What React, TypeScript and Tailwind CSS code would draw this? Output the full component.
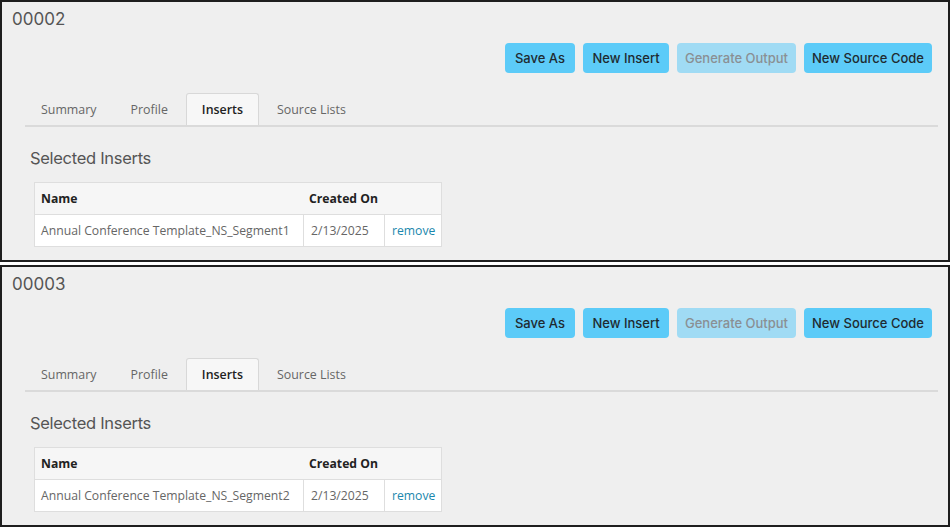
import React from "react";

const btnBase =
  "h-[30px] rounded-[4px] text-[13px] font-medium leading-none flex items-center justify-center whitespace-nowrap";

function Panel({ id, seg }: { id: string; seg: string }) {
  return (
    <div className="h-[262px] border-2 border-[#1e1e1e] bg-[#efefef] flex flex-col">
      <div
        className="ml-[10px] mt-[5px] text-[17px] leading-[24px] text-[#555]"
        style={{ fontFamily: "'Inter', sans-serif" }}
      >
        {id}
      </div>
      <div
        className="mt-[12px] mr-[16px] flex justify-end gap-[8px]"
        style={{ fontFamily: "'Inter', sans-serif" }}
      >
        <button className={`${btnBase} bg-[#5ccbf8] text-[#1f2a30] w-[70px]`}>Save As</button>
        <button className={`${btnBase} bg-[#5ccbf8] text-[#1f2a30] w-[86px]`}>New Insert</button>
        <button className={`${btnBase} bg-[#a0dbf4] text-[#8a8f93] w-[119px]`}>Generate Output</button>
        <button className={`${btnBase} bg-[#5ccbf8] text-[#1f2a30] w-[128px]`}>New Source Code</button>
      </div>
      <div
        className="mt-[20px] ml-[23px] mr-[10px] flex border-b-2 border-[#dadada] text-[12.4px]"
        style={{ fontFamily: "'Open Sans', sans-serif" }}
      >
        <div className="h-[32px] px-[16px] pt-[2px] mr-[2px] flex items-center text-[#666]">Summary</div>
        <div className="h-[32px] px-[16px] pt-[2px] mr-[2px] flex items-center text-[#666]">Profile</div>
        <div className="h-[32px] px-[15px] pt-[2px] mr-[2px] flex items-center text-[#222] font-semibold bg-[#f7f7f7] border border-b-0 border-[#d8d8d8] rounded-t-[3px]">
          Inserts
        </div>
        <div className="h-[32px] px-[16px] pt-[2px] flex items-center text-[#666]">Source Lists</div>
      </div>
      <div
        className="ml-[28px] mt-[19px] text-[16.5px] leading-[24px] tracking-[-0.3px] text-[#555]"
        style={{ fontFamily: "'Inter', sans-serif" }}
      >
        Selected Inserts
      </div>
      <div
        className="ml-[32px] mt-[12px] w-[408px] border border-[#dedede] text-[12.2px]"
        style={{ fontFamily: "'Open Sans', sans-serif" }}
      >
        <div className="flex h-[32px] pt-[2px] bg-[#f6f6f6] border-b border-[#dedede] font-bold text-[#222]">
          <div className="w-[268px] pl-[6px] flex items-center">Name</div>
          <div className="flex-1 pl-[6px] flex items-center">Created On</div>
        </div>
        <div className="flex h-[31px] bg-white text-[#666]">
          <div className="w-[268px] pl-[6px] pt-[2px] flex items-center whitespace-nowrap">Annual Conference Template_NS_{seg}</div>
          <div className="w-[81px] pl-[7px] pt-[2px] flex items-center border-l border-[#dedede]">2/13/2025</div>
          <div className="flex-1 pl-[7px] pt-[2px] flex items-center border-l border-[#dedede] text-[#1b87ad]">remove</div>
        </div>
      </div>
    </div>
  );
}

export default function App() {
  return (
    <div className="w-[950px] h-[527px] bg-white flex flex-col gap-[3px]">
      <Panel id="00002" seg="Segment1" />
      <Panel id="00003" seg="Segment2" />
    </div>
  );
}
